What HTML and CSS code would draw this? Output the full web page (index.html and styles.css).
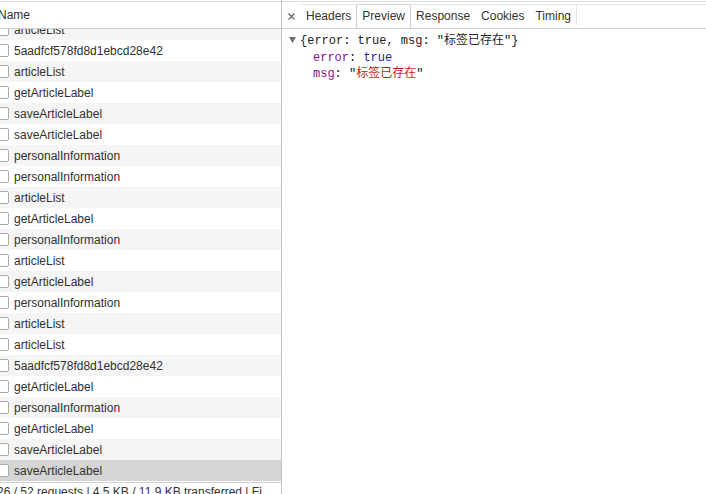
FILE: index.html
```html
<!DOCTYPE html>
<html lang="en">
<head>
  <meta charset="UTF-8" />
  <meta name="viewport" content="width=device-width,initial-scale=1.0" />
  <title>Network Preview</title>
  <link rel="stylesheet" href="styles.css">
</head>
<body>

  <!-- Request list -->
  <div id="request-panel">
    <div class="list-header">Name</div>
    <div class="list-body">
      <div class="list-scroll">
        <div class="req-row odd"><span class="req-box"></span>articleList</div>
        <div class="req-row"><span class="req-box"></span>5aadfcf578fd8d1ebcd28e42</div>
        <div class="req-row odd"><span class="req-box"></span>articleList</div>
        <div class="req-row"><span class="req-box"></span>getArticleLabel</div>
        <div class="req-row odd"><span class="req-box"></span>saveArticleLabel</div>
        <div class="req-row"><span class="req-box"></span>saveArticleLabel</div>
        <div class="req-row odd"><span class="req-box"></span>personalInformation</div>
        <div class="req-row"><span class="req-box"></span>personalInformation</div>
        <div class="req-row odd"><span class="req-box"></span>articleList</div>
        <div class="req-row"><span class="req-box"></span>getArticleLabel</div>
        <div class="req-row odd"><span class="req-box"></span>personalInformation</div>
        <div class="req-row"><span class="req-box"></span>articleList</div>
        <div class="req-row odd"><span class="req-box"></span>getArticleLabel</div>
        <div class="req-row"><span class="req-box"></span>personalInformation</div>
        <div class="req-row odd"><span class="req-box"></span>articleList</div>
        <div class="req-row"><span class="req-box"></span>articleList</div>
        <div class="req-row odd"><span class="req-box"></span>5aadfcf578fd8d1ebcd28e42</div>
        <div class="req-row"><span class="req-box"></span>getArticleLabel</div>
        <div class="req-row odd"><span class="req-box"></span>personalInformation</div>
        <div class="req-row"><span class="req-box"></span>getArticleLabel</div>
        <div class="req-row odd"><span class="req-box"></span>saveArticleLabel</div>
        <div class="req-row selected"><span class="req-box"></span>saveArticleLabel</div>
      </div>
    </div>
    <div class="list-footer">26 / 52 requests | 4.5 KB / 11.9 KB transferred | Fi</div>
  </div>

  <!-- Detail panel -->
  <div id="detail-panel">
    <div class="tab-bar">
      <div class="tab-close">
        <svg width="7" height="7" viewBox="0 0 7 7"><path d="M0.5 0.5 L6.5 6.5 M6.5 0.5 L0.5 6.5" stroke="#666" stroke-width="1.2"/></svg>
      </div>
      <div class="tab-strip">
        <div class="tab">Headers</div>
        <div class="tab active">Preview</div>
        <div class="tab">Response</div>
        <div class="tab">Cookies</div>
        <div class="tab last">Timing</div>
      </div>
    </div>
    <div class="preview">
      <div class="json-line"><svg class="arrow" width="7" height="6" viewBox="0 0 7 6"><path d="M0 0 H7 L3.5 6 Z" fill="#6e6e6e"/></svg>{error: true, msg: "标签已存在"}</div>
      <div class="json-line child"><span class="key">error</span>: <span class="bool">true</span></div>
      <div class="json-line child"><span class="key">msg</span>: "<span class="str">标签已存在</span>"</div>
    </div>
  </div>

</body>
</html>
```

FILE: styles.css
```css
body {
  margin: 0;
  height: 494px;
  overflow: hidden;
  display: flex;
  font-family: "Liberation Sans", Arial, sans-serif;
  font-size: 12px;
  color: #303030;
  background: #fff;
}
#request-panel {
  width: 281px;
  border-right: 1px solid #c4c4c4;
  display: flex;
  flex-direction: column;
  overflow: hidden;
}
.list-header {
  flex: none;
  margin-top: 1px;
  border-top: 1px solid #dcdcdc;
  border-bottom: 1px solid #cdcdcd;
  height: 26px;
  line-height: 26px;
  margin-left: -2px;
}
.list-body {
  flex: none;
  height: 452px;
  overflow: hidden;
}
.list-scroll {
  margin-top: -10px;
}
.req-row {
  height: 21px;
  display: flex;
  align-items: center;
  white-space: nowrap;
}
.req-row.odd {
  background: #f5f5f5;
}
.req-row.selected {
  background: #d5d5d5;
}
.req-box {
  width: 11px;
  height: 11px;
  border: 1px solid #a9a9a9;
  border-radius: 2px;
  background: #fff;
  margin-left: -4px;
  margin-right: 5px;
  flex: none;
}
.list-footer {
  flex: none;
  margin-top: 1px;
  border-top: 1px solid #d0d0d0;
  padding-top: 2px;
  line-height: 14px;
  white-space: nowrap;
  margin-left: -3px;
  color: #333;
}
#detail-panel {
  flex: 1;
  display: flex;
  flex-direction: column;
}
.tab-bar {
  margin-top: 1px;
  border-top: 1px solid #dcdcdc;
  border-bottom: 1px solid #cdcdcd;
  height: 26px;
  display: flex;
}
.tab-close {
  width: 19px;
  display: flex;
  align-items: center;
  justify-content: center;
  padding-top: 2px;
}
.tab-strip {
  flex: 1;
  display: flex;
  margin-top: 2px;
  border-top: 1px solid #e6e6e6;
}
.tab {
  padding: 0 5px;
  line-height: 23px;
  color: #333;
  border: 1px solid transparent;
  border-bottom: none;
  margin-top: -1px;
  margin-left: -1px;
}
.tab.active {
  border-color: #cfcfcf;
  background: #fff;
}
.tab.last {
  border-right: 1px solid #e2e2e2;
  height: 20px;
}
.preview {
  padding: 4px 0 0 7px;
  font-family: "Liberation Mono", "Noto Sans CJK SC", monospace;
  font-size: 12px;
  color: #222;
}
.json-line {
  line-height: 16.5px;
  white-space: pre;
}
.json-line .arrow {
  margin-right: 4px;
  vertical-align: 1px;
}
.json-line.child {
  padding-left: 24px;
}
.key {
  color: #881391;
}
.bool {
  color: #1c1aa6;
}
.str {
  color: #c41a16;
}
```
